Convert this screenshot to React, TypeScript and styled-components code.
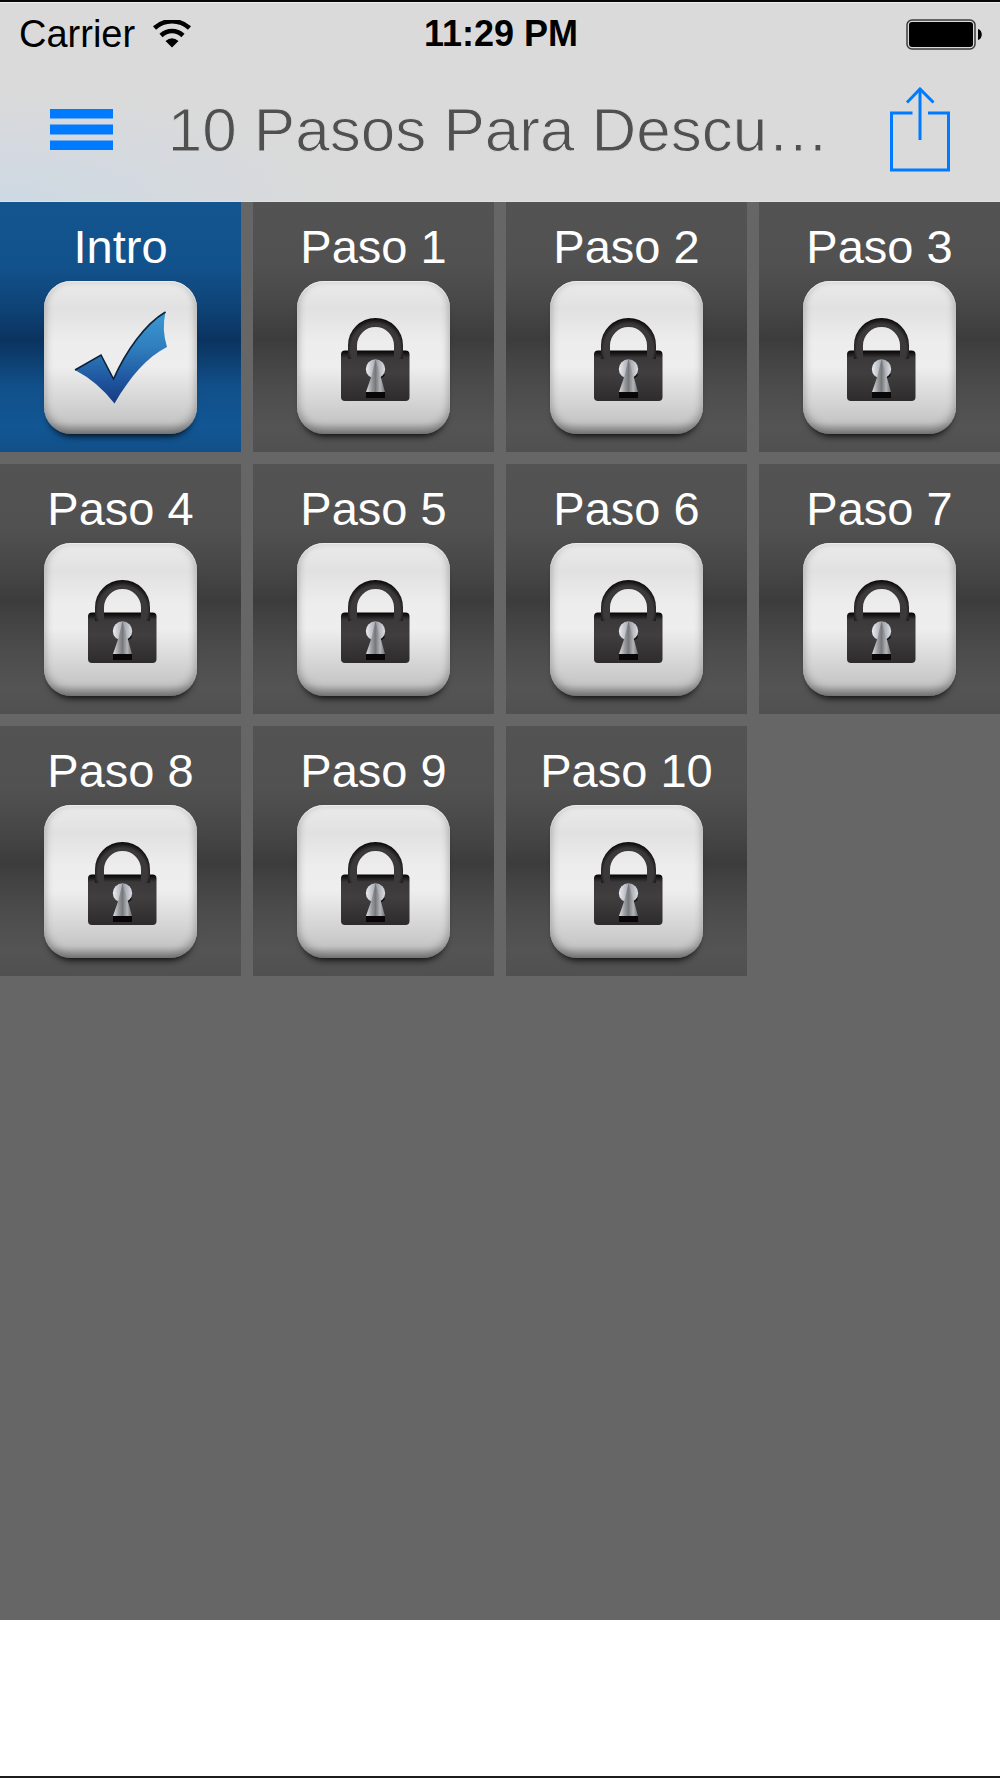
import React from "react";
import styled, { createGlobalStyle } from "styled-components";

const GlobalStyle = createGlobalStyle`
  * { box-sizing: border-box; }
  body {
    margin: 0;
    background: #fff;
    font-family: "Liberation Sans", Arial, Helvetica, sans-serif;
  }
`;

const Page = styled.div`
  display: flex;
  flex-direction: column;
  min-height: 100vh;
  border-top: 2px solid #0a0606;
  border-bottom: 2px solid #1c1c1c;
`;

const Header = styled.header`
  background: radial-gradient(ellipse 340px 110px at 0 100%, #ced9e4, rgba(206, 217, 228, 0)), #dadada;
  border-bottom: 1px solid #e0e2e2;
  box-shadow: inset 0 1px #eee;
`;

const StatusBar = styled.div`
  display: grid;
  grid-template-columns: 1fr auto 1fr;
  align-items: center;
  height: 64px;
  padding: 0 17px 0 19px;
  color: #000;
  font-size: 38px;
`;

const Carrier = styled.div`
  display: flex;
  align-items: center;
  gap: 18px;
`;

const Clock = styled.time`
  font-size: 36px;
  font-weight: 700;
`;

const BatterySlot = styled.div`
  display: flex;
  justify-content: flex-end;
`;

const NavBar = styled.nav`
  display: flex;
  align-items: center;
  height: 135px;
  padding: 0 50px 8px;
`;

const IconButton = styled.button`
  display: flex;
  flex: none;
  padding: 0;
  border: 0;
  background: none;
  color: #007aff;
  cursor: pointer;
`;

/* The thin outline in the bar colour gives the title its light weight. */
const Title = styled.h1`
  flex: 1;
  min-width: 0;
  margin: 0;
  padding-right: 6px;
  color: #505050;
  font-size: 62px;
  font-weight: 400;
  line-height: 72px;
  text-align: center;
  white-space: nowrap;
  -webkit-text-stroke: 1px #dadada;
`;

const Main = styled.main`
  flex: 1;
  background: #666;
`;

const StepGrid = styled.ul`
  display: grid;
  grid-template-columns: repeat(4, 1fr);
  gap: 12px;
  margin: 0;
  padding: 0;
  list-style: none;
`;

const Tile = styled.button<{ $open: boolean }>`
  display: flex;
  flex-direction: column;
  align-items: center;
  gap: 5px;
  width: 100%;
  padding: 16px 0 18px;
  border: 0;
  background: ${(p) =>
    p.$open
      ? "linear-gradient(#14558f 0%, #12528c 25%, #0e4275 43%, #0b3360 55%, #0c3a69 60%, #11508a 74%, #125694 90%, #115089 100%)"
      : "linear-gradient(#535353 0%, #515151 25%, #464646 43%, #3c3c3c 55%, #414141 60%, #4c4c4c 74%, #545454 90%, #505050 100%)"};
  color: #fff;
  font-family: inherit;
  font-size: 47px;
  line-height: 58px;
  cursor: pointer;
`;

const Plate = styled.span`
  display: block;
  width: 153px;
  height: 153px;
  border-radius: 27px;
  background: linear-gradient(#ebebeb 0%, #e1e1e1 18%, #ededed 40%, #eee 56%, #dadada 74%, #c6c6c6 92%, #9a9a9a 100%);
  box-shadow:
    inset 0 1px 1px #eee,
    inset 0 -5px 10px rgba(0, 0, 0, 0.26),
    inset 0 0 9px rgba(0, 0, 0, 0.1),
    0 7px 7px -5px rgba(0, 0, 0, 0.9);

  svg { display: block; }
`;

const Footer = styled.footer`
  height: 156px;
  background: #fff;
`;

const WifiIcon = () => (
  <svg width="38" height="28" viewBox="0 0 38 28" aria-hidden="true">
    <path d="M1.5 8C11.5-1 26.500-1 36.500 8" fill="none" stroke="#000" strokeWidth="4.600" />
    <path d="M8 15.500C14.500 9.500 23.500 9.500 30 15.500" fill="none" stroke="#000" strokeWidth="4.600" />
    <path d="M12.500 21Q19 15.500 25.500 21L19 27.500Z" />
  </svg>
);

const BatteryIcon = () => (
  <svg width="77" height="31" viewBox="0 0 77 31" role="img" aria-label="Battery full">
    <rect x="1" y="1" width="68" height="29" rx="5" fill="none" stroke="#3c3c3c" strokeWidth="1.500" />
    <rect x="3" y="3" width="64" height="25" rx="3" />
    <path d="M72 10c5 1 5 10 0 11z" />
  </svg>
);

const MenuIcon = () => (
  <svg width="63" height="41" viewBox="0 0 63 41" fill="currentColor" aria-hidden="true">
    <path d="M0 0h63v9.500H0zM0 15.500h63v10H0zM0 31.500h63v9.500H0z" />
  </svg>
);

const ShareIcon = () => (
  <svg width="60" height="85" viewBox="0 0 60 85" fill="none" stroke="currentColor" strokeWidth="3" aria-hidden="true">
    <path d="M22.500 26H1.500v57h57V26H38M30 2v51" />
    <path d="M17 15.500 30 2l13.500 13.500" />
  </svg>
);

const CheckIcon = () => (
  <svg width="153" height="153" viewBox="0 0 153 153" aria-hidden="true">
    <defs>
      <linearGradient id="check" x1="0" y1="0" x2="0" y2="1">
        <stop offset="0" stopColor="#3c98d2" />
        <stop offset="0.400" stopColor="#2f7dbd" />
        <stop offset="0.750" stopColor="#1e559e" />
        <stop offset="1" stopColor="#163a80" />
      </linearGradient>
    </defs>
    <path
      d="M31 89 57 74 69.500 98C82 70 101 43 121.500 31Q117.500 49 123 66C103 76 86 96 70.500 122.500Q54 101 31 89Z"
      fill="url(#check)"
    />
    <path d="M31 89 57 74 69.500 98C82 70 101 43 121.500 31" fill="none" stroke="#0b2238" strokeWidth="1.600" />
  </svg>
);

const LockIcon = () => (
  <svg width="153" height="153" viewBox="0 0 153 153" aria-hidden="true">
    <defs>
      <linearGradient id="lock" x1="0" y1="0" x2="0" y2="1">
        <stop offset="0" stopColor="#060404" />
        <stop offset="0.060" stopColor="#1a1718" />
        <stop offset="0.150" stopColor="#3b393a" />
        <stop offset="0.450" stopColor="#403e3f" />
        <stop offset="1" stopColor="#2d2b2c" />
      </linearGradient>
      <radialGradient id="shackle" gradientUnits="userSpaceOnUse" cx="78.500" cy="68" r="31">
        <stop offset="0" stopColor="#3b393a" />
        <stop offset="0.800" stopColor="#3b393a" />
        <stop offset="0.920" stopColor="#1d1a1b" />
        <stop offset="1" stopColor="#080606" />
      </radialGradient>
      <linearGradient id="metal">
        <stop offset="0" stopColor="#dfe0e4" />
        <stop offset="0.300" stopColor="#9a9b9f" />
        <stop offset="0.500" stopColor="#77787c" />
        <stop offset="0.750" stopColor="#b4b5b9" />
        <stop offset="1" stopColor="#6f7074" />
      </linearGradient>
      <linearGradient id="disc">
        <stop offset="0" stopColor="#eceef4" />
        <stop offset="0.550" stopColor="#9fa1a8" />
        <stop offset="1" stopColor="#dcdee6" />
      </linearGradient>
    </defs>
    <rect x="44" y="69.500" width="68.500" height="50.500" rx="4" fill="url(#lock)" />
    <path d="M55.500 78V64.500a23 23 0 0 1 46 0V78" fill="none" stroke="url(#shackle)" strokeWidth="9" />
    <path d="M69 90Q78 105 87.500 90v5L78 101Z" fill="#0c0a0a" />
    <circle cx="78.500" cy="88" r="9.700" fill="url(#disc)" />
    <path d="M69 111h19v6H69z" fill="#080607" />
    <path d="M78.500 78 83.500 95 88 111H69l5.500-16Z" fill="url(#metal)" />
  </svg>
);

const steps = ["Intro", ...Array.from({ length: 10 }, (_, i) => `Paso ${i + 1}`)];

export default function App() {
  return (
    <Page>
      <GlobalStyle />
      <Header>
        <StatusBar>
          <Carrier>
            Carrier
            <WifiIcon />
          </Carrier>
          <Clock>11:29 PM</Clock>
          <BatterySlot>
            <BatteryIcon />
          </BatterySlot>
        </StatusBar>
        <NavBar>
          <IconButton type="button" aria-label="Menu">
            <MenuIcon />
          </IconButton>
          <Title>10 Pasos Para Descu…</Title>
          <IconButton type="button" aria-label="Share">
            <ShareIcon />
          </IconButton>
        </NavBar>
      </Header>
      <Main>
        <StepGrid>
          {steps.map((name, i) => (
            <li key={name}>
              <Tile type="button" $open={i === 0}>
                {name}
                <Plate>{i === 0 ? <CheckIcon /> : <LockIcon />}</Plate>
              </Tile>
            </li>
          ))}
        </StepGrid>
      </Main>
      <Footer />
    </Page>
  );
}
